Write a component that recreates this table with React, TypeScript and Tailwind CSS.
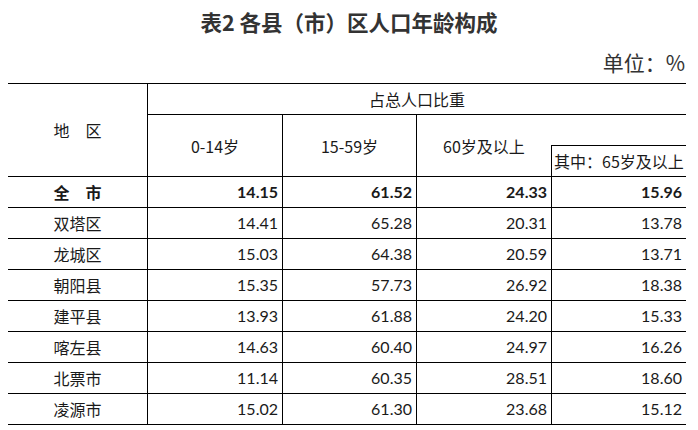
import React from "react";

const rows: string[][] = [
  ["双塔区", "14.41", "65.28", "20.31", "13.78"],
  ["龙城区", "15.03", "64.38", "20.59", "13.71"],
  ["朝阳县", "15.35", "57.73", "26.92", "18.38"],
  ["建平县", "13.93", "61.88", "24.20", "15.33"],
  ["喀左县", "14.63", "60.40", "24.97", "16.26"],
  ["北票市", "11.14", "60.35", "28.51", "18.60"],
  ["凌源市", "15.02", "61.30", "23.68", "15.12"],
];

const cjk = "font-['Noto_Sans_CJK_SC','Noto_Sans',sans-serif]";
const num = "font-['Lato','Noto_Sans_CJK_SC',sans-serif]";

export default function App() {
  return (
    <div className={`w-[698px] h-[430px] bg-white overflow-hidden ${cjk}`}>
      <div className="h-[44px] flex items-center justify-center text-[21.5px] font-bold text-[#333] leading-none">
        表2&nbsp;各县（市）区人口年龄构成
      </div>
      <div className="h-[39px] flex items-center justify-end pr-[13px] pb-[2px] text-[21px] text-[#333] leading-none">
        单位：%
      </div>
      <div className="ml-[8px] w-[678px] grid grid-cols-[139px_135px_134px_135px_135px] grid-rows-[repeat(11,31px)] border-b border-black text-[#1a1a1a] text-[16px] leading-none">
        <div className="row-span-3 border-t border-black flex items-center justify-center">
          地　区
        </div>
        <div className="col-span-4 border-t border-l border-black flex items-center justify-center">
          占总人口比重
        </div>
        <div className="col-start-2 row-start-2 row-span-2 border-t border-l border-black flex items-center justify-center">
          0-14岁
        </div>
        <div className="col-start-3 row-start-2 row-span-2 border-t border-l border-black flex items-center justify-center">
          15-59岁
        </div>
        <div className="col-start-4 row-start-2 row-span-2 border-t border-l border-black flex items-center justify-center">
          60岁及以上
        </div>
        <div className="col-start-5 row-start-2 border-t border-black"></div>
        <div className="col-start-5 row-start-3 border-t border-l border-black flex items-center justify-center whitespace-nowrap">
          其中：65岁及以上
        </div>

        <div className="border-t border-black flex items-center justify-center font-bold">
          全　市
        </div>
        {["14.15", "61.52", "24.33", "15.96"].map((v, i) => (
          <div
            key={i}
            className={`border-t border-l border-black flex items-center justify-end pr-[4px] font-bold ${num}`}
          >
            {v}
          </div>
        ))}

        {rows.map((r) => (
          <React.Fragment key={r[0]}>
            <div className="border-t border-black flex items-center justify-center">
              {r[0]}
            </div>
            {r.slice(1).map((v, i) => (
              <div
                key={i}
                className={`border-t border-l border-black flex items-center justify-end pr-[4px] ${num}`}
              >
                {v}
              </div>
            ))}
          </React.Fragment>
        ))}
      </div>
    </div>
  );
}
